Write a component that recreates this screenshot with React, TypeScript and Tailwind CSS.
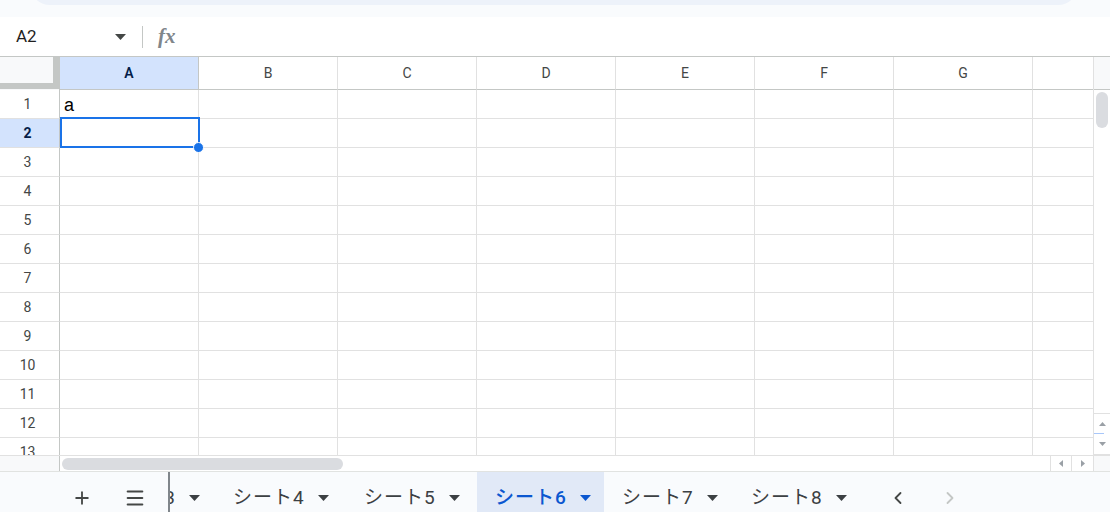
import { ChevronLeft, ChevronRight, Menu, Plus } from "lucide-react";

const COLS = ["A", "B", "C", "D", "E", "F", "G", ""];
const ROWS = Array.from({ length: 13 }, (_, i) => i + 1);

type Tab = { name: string; width: string; active?: boolean };

const TABS: Tab[] = [
  { name: "シート4", width: "w-[131px]" },
  { name: "シート5", width: "w-[131px]" },
  { name: "シート6", width: "w-[127px]", active: true },
  { name: "シート7", width: "w-[129px]" },
  { name: "シート8", width: "w-[129px]" },
];

const uiFont = "font-['Roboto','Noto_Sans_CJK_JP',sans-serif]";

function Caret({ className = "" }: { className?: string }) {
  return (
    <svg width="11" height="6" viewBox="0 0 11 6" className={className}>
      <path d="M0 0h11L5.5 6z" fill="currentColor" />
    </svg>
  );
}

function FormulaBar() {
  return (
    <div className="flex h-[40px] items-center border-b border-[#c4c7c5] bg-white">
      <div className="flex w-[142px] items-center pl-[16px] pr-[16px]">
        <span className={`${uiFont} flex-1 text-[17px] text-[#1f1f1f]`}>A2</span>
        <Caret className="text-[#444746]" />
      </div>
      <div className="h-[22px] w-px bg-[#c4c7c5]" />
      <span className="ml-[15px] font-['Liberation_Serif',serif] text-[21px] font-bold italic leading-none text-[#80868b]">
        fx
      </span>
    </div>
  );
}

function HeaderRow() {
  return (
    <div className="flex h-[33px] shrink-0">
      {/* corner with the freeze handles */}
      <div className="flex h-[33px] w-[60px] shrink-0 flex-col border-r border-[#c4c7c5] bg-[#f8f9fa]">
        <div className="flex flex-1">
          <div className="flex-1" />
          <div className="w-[6px] bg-[#c4c7c5]" />
        </div>
        <div className="h-[6px] bg-[#c4c7c5]" />
        <div className="h-[1px] bg-[#f8f9fa]" />
      </div>
      {COLS.map((c, i) => (
        <div
          key={i}
          className={`flex h-[33px] w-[139px] shrink-0 items-center justify-center border-r border-b border-[#c4c7c5] text-[14px] ${uiFont} ${
            c === "A"
              ? "bg-[#d3e3fd] font-semibold text-[#041e49]"
              : "border-r-[#e1e1e1] bg-white text-[#444746]"
          }`}
        >
          {c}
        </div>
      ))}
    </div>
  );
}

function Grid() {
  return (
    <div className="relative flex-1 overflow-hidden">
      <HeaderRow />
      {ROWS.map((r) => (
        <div key={r} className="flex h-[29px] shrink-0">
          <div
            className={`flex h-[29px] w-[60px] shrink-0 items-center justify-center border-r border-b border-r-[#c4c7c5] border-b-[#e1e1e1] pr-[4px] text-[14px] ${uiFont} ${
              r === 2 ? "bg-[#d3e3fd] font-bold text-[#041e49]" : "bg-white text-[#444746]"
            }`}
          >
            {r}
          </div>
          {COLS.map((_, i) => (
            <div
              key={i}
              className="flex h-[29px] w-[139px] shrink-0 items-end border-r border-b border-[#e1e1e1] pb-[4px] pl-[4px] font-['Liberation_Sans',Arial,sans-serif] text-[18px] leading-none text-black"
            >
              {r === 1 && i === 0 ? "a" : ""}
            </div>
          ))}
        </div>
      ))}

      {/* active cell A2 with fill handle */}
      <div className="absolute left-[60px] top-[60px] h-[31px] w-[140px] border-2 border-[#1a73e8]" />
      <div className="absolute left-[193px] top-[85px] h-[11px] w-[11px] rounded-full border border-white bg-[#1a73e8]" />
    </div>
  );
}

function VScroll() {
  return (
    <div className="flex w-[17px] shrink-0 flex-col border-l border-[#e1e1e1] bg-white">
      <div className="h-[33px] shrink-0 border-b border-[#c4c7c5] bg-[#f8f9fa]" />
      <div className="flex flex-1 flex-col px-[2px] pt-[2px]">
        <div className="h-[36px] rounded-full bg-[#dadce0]" />
        <div className="flex-1" />
      </div>
      <div className="flex h-[42px] shrink-0 flex-col items-center">
        <div className="flex h-[20px] w-full items-center justify-center border-t border-[#e1e1e1]">
          <svg width="7" height="4" viewBox="0 0 7 4">
            <path d="M3.5 0L7 4H0z" fill="#9aa0a6" />
          </svg>
        </div>
        <div className="h-[1px] w-[10px] self-start bg-[#a8c7fa]" />
        <div className="flex h-[21px] w-full items-center justify-center border-b border-[#e1e1e1]">
          <svg width="7" height="4" viewBox="0 0 7 4">
            <path d="M0 0h7L3.5 4z" fill="#9aa0a6" />
          </svg>
        </div>
      </div>
    </div>
  );
}

function HScroll() {
  return (
    <div className="flex h-[16px] shrink-0 border-t border-[#e1e1e1] bg-white">
      <div className="w-[60px] shrink-0 border-r border-[#c4c7c5] bg-[#f8f9fa]" />
      <div className="flex flex-1 items-center pl-[2px]">
        <div className="h-[12px] w-[281px] rounded-full bg-[#dadce0]" />
      </div>
      <div className="flex w-[21px] items-center justify-center border-l border-[#e1e1e1]">
        <svg width="4" height="7" viewBox="0 0 4 7">
          <path d="M4 0v7L0 3.5z" fill="#9aa0a6" />
        </svg>
      </div>
      <div className="flex w-[22px] items-center justify-center border-l border-[#e1e1e1]">
        <svg width="4" height="7" viewBox="0 0 4 7">
          <path d="M0 0v7l4-3.5z" fill="#9aa0a6" />
        </svg>
      </div>
      <div className="w-[17px] border-l border-[#e1e1e1] bg-[#f8f9fa]" />
    </div>
  );
}

function SheetTab({ tab }: { tab: Tab }) {
  return (
    <div
      className={`flex h-[52px] shrink-0 items-center pl-[18px] ${tab.width} ${
        tab.active ? "bg-[#e1e9f7] font-medium text-[#0b57d0]" : "font-normal text-[#3c4043]"
      }`}
    >
      <span className={`${uiFont} text-[19px] tracking-[1px]`}>{tab.name}</span>
      <Caret className="ml-[13px]" />
    </div>
  );
}

function TabBar() {
  return (
    <div className="flex h-[41px] shrink-0 items-start overflow-hidden border-t border-[#e1e3e1] bg-[#f9fbfd]">
      <div className="flex h-[52px] items-center pl-[62px]">
        <button className="flex h-[40px] w-[40px] items-center justify-center text-[#444746]">
          <Plus size={20} strokeWidth={2.2} />
        </button>
        <button className="ml-[13px] flex h-[40px] w-[40px] items-center justify-center text-[#444746]">
          <Menu size={22} strokeWidth={2.2} />
        </button>
        {/* sheet 3 scrolled out to the left */}
        <div className="ml-[13px] flex h-[52px] w-[47px] shrink-0 items-center justify-end overflow-hidden border-l-2 border-[#80868b] pr-[15px] text-[#3c4043]">
          <span className={`${uiFont} shrink-0 whitespace-nowrap text-[19px] tracking-[1px]`}>
            シート3
          </span>
          <Caret className="ml-[13px] shrink-0" />
        </div>
        {TABS.map((t) => (
          <SheetTab key={t.name} tab={t} />
        ))}
        <button className="ml-[16px] flex h-[40px] w-[40px] items-center justify-center text-[#444746]">
          <ChevronLeft size={20} strokeWidth={2.2} />
        </button>
        <button className="ml-[12px] flex h-[40px] w-[40px] items-center justify-center text-[#c4c7c5]">
          <ChevronRight size={20} strokeWidth={2.2} />
        </button>
      </div>
    </div>
  );
}

export default function App() {
  return (
    <div className="flex h-[512px] w-[1110px] flex-col overflow-hidden bg-white">
      {/* bottom edge of the search pill */}
      <div className="h-[17px] shrink-0 overflow-hidden bg-[#f9fbfd] px-[30px]">
        <div className="mt-[-35px] h-[40px] w-[1048px] rounded-[20px] bg-[#edf2fa]" />
      </div>
      <FormulaBar />
      <div className="flex h-[398px] shrink-0">
        <Grid />
        <VScroll />
      </div>
      <HScroll />
      <TabBar />
    </div>
  );
}
